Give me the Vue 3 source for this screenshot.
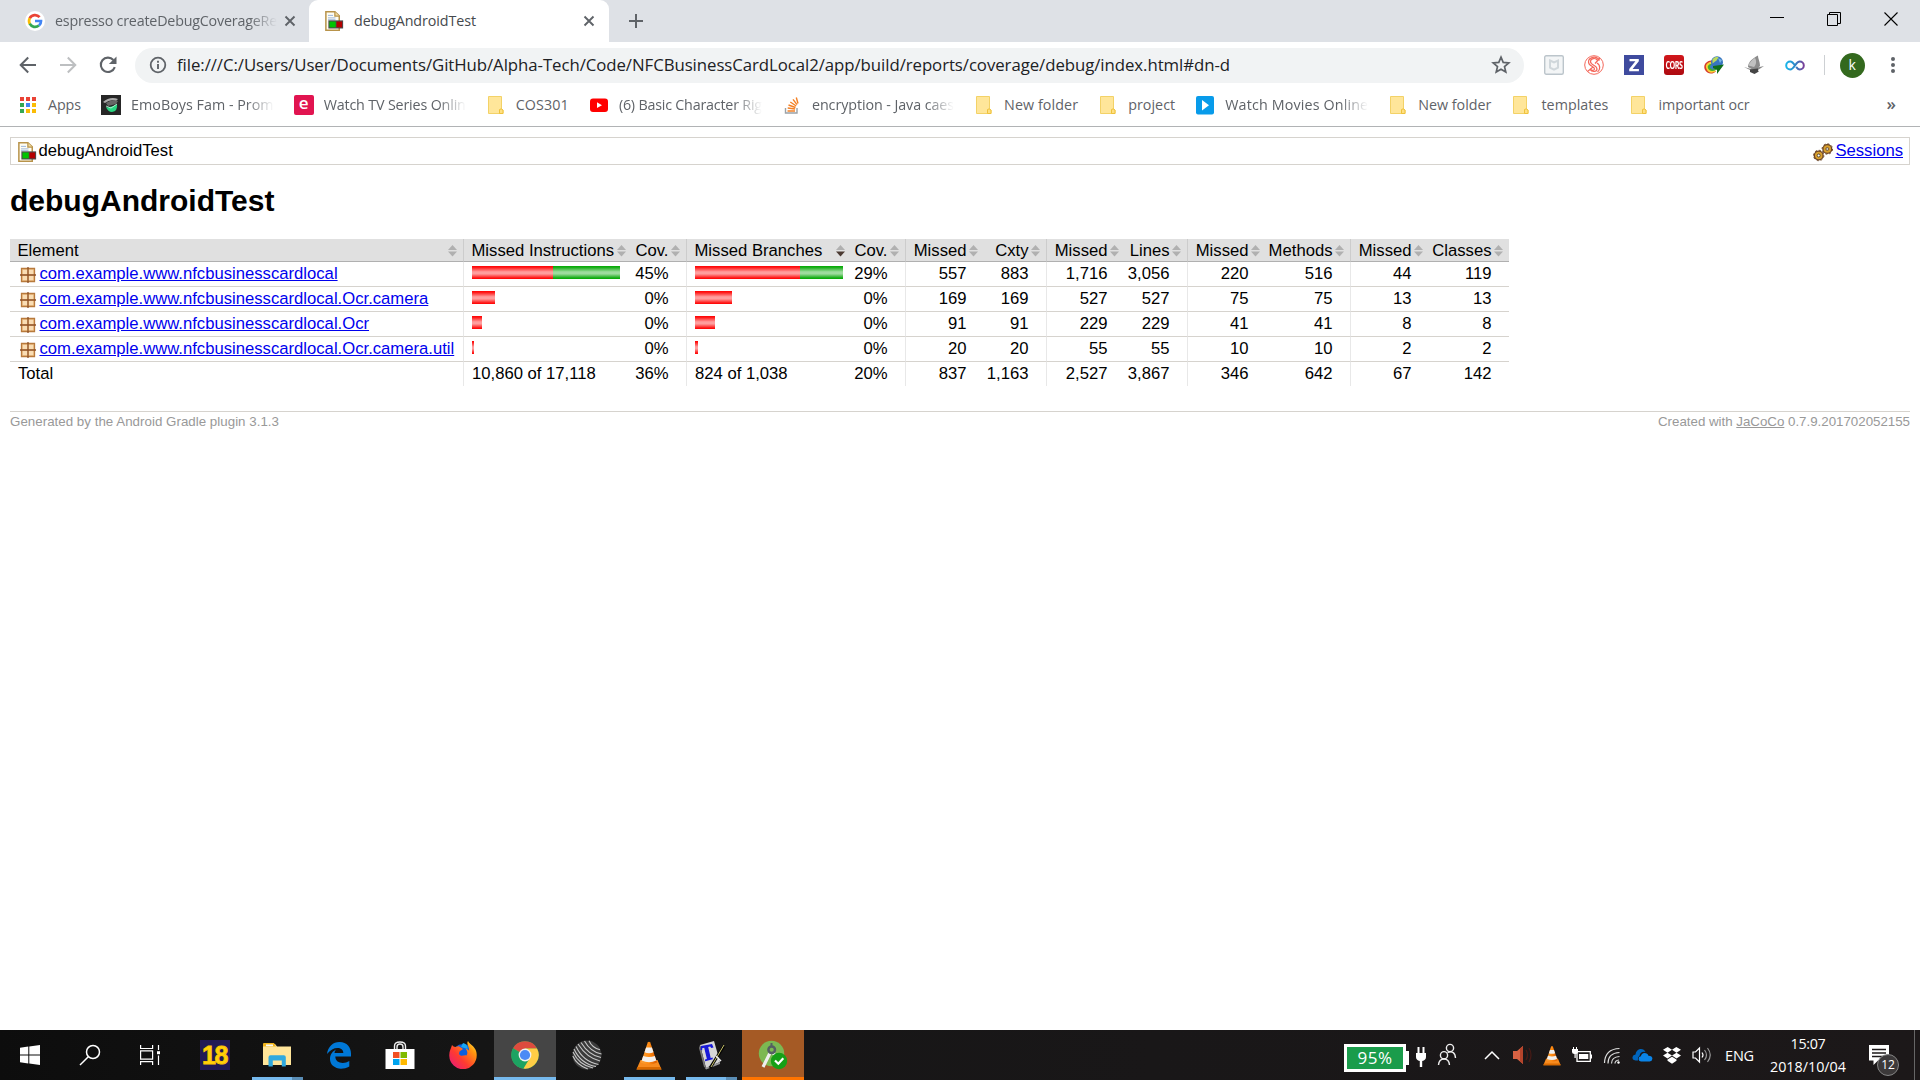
<script setup>
// Spreads a label's letters so that it fills the given width in pixels.
const vFit = {
  mounted(el, { value }) {
    if (!value) return
    const natural = el.getBoundingClientRect().width
    el.style.letterSpacing = `${(value - natural) / el.textContent.length}px`
  },
}

const bookmarks = [
  { icon: 'apps', label: 'Apps', width: 33 },
  { icon: 'emo', label: 'EmoBoys Fam - Prom', width: 142.5, fade: true },
  { icon: 'e', label: 'Watch TV Series Onlin', width: 142, fade: true },
  { icon: 'folder', label: 'COS301', width: 53 },
  { icon: 'youtube', label: '(6) Basic Character Rig', width: 143, fade: true },
  { icon: 'stack', label: 'encryption - Java caes', width: 142, fade: true },
  { icon: 'folder', label: 'New folder', width: 74 },
  { icon: 'folder', label: 'project', width: 47 },
  { icon: 'play', label: 'Watch Movies Online', width: 143, fade: true },
  { icon: 'folder', label: 'New folder', width: 73 },
  { icon: 'folder', label: 'templates', width: 67 },
  { icon: 'folder', label: 'important ocr', width: 91 },
]

const columns = [
  { label: 'Element', kind: 'name', width: 453 },
  { label: 'Missed Instructions', kind: 'bar', width: 168 },
  { label: 'Cov.', kind: 'ctr2', width: 55 },
  { label: 'Missed Branches', kind: 'bar', width: 165, sorted: true },
  { label: 'Cov.', kind: 'ctr2', width: 54 },
  { label: 'Missed', kind: 'ctr1', width: 79 },
  { label: 'Cxty', kind: 'ctr2', width: 62 },
  { label: 'Missed', kind: 'ctr1', width: 79 },
  { label: 'Lines', kind: 'ctr2', width: 62 },
  { label: 'Missed', kind: 'ctr1', width: 79 },
  { label: 'Methods', kind: 'ctr2', width: 84 },
  { label: 'Missed', kind: 'ctr1', width: 79 },
  { label: 'Classes', kind: 'ctr2', width: 80 },
]

const rows = [
  {
    name: 'com.example.www.nfcbusinesscardlocal',
    cells: [[81, 67], '45%', [105, 43], '29%', '557', '883', '1,716', '3,056', '220', '516', '44', '119'],
  },
  {
    name: 'com.example.www.nfcbusinesscardlocal.Ocr.camera',
    cells: [[23, 0], '0%', [37, 0], '0%', '169', '169', '527', '527', '75', '75', '13', '13'],
  },
  {
    name: 'com.example.www.nfcbusinesscardlocal.Ocr',
    cells: [[10, 0], '0%', [20, 0], '0%', '91', '91', '229', '229', '41', '41', '8', '8'],
  },
  {
    name: 'com.example.www.nfcbusinesscardlocal.Ocr.camera.util',
    cells: [[2, 0], '0%', [3, 0], '0%', '20', '20', '55', '55', '10', '10', '2', '2'],
  },
]

const totals = ['Total', '10,860 of 17,118', '36%', '824 of 1,038', '20%', '837', '1,163', '2,527', '3,867', '346', '642', '67', '142']
</script>

<template>
  <div class="screen">
    <svg class="defs" width="0" height="0">
      <defs>
        <linearGradient id="cone" x1="0" x2="1"><stop offset="0" stop-color="#f9a13a" /><stop offset=".5" stop-color="#ff8a10" /><stop offset="1" stop-color="#d85a00" /></linearGradient>
        <linearGradient id="flame" x1="0" y1="1" x2="1" y2="0"><stop offset="0" stop-color="#e31587" /><stop offset=".4" stop-color="#ff3b30" /><stop offset=".75" stop-color="#ff980e" /><stop offset="1" stop-color="#fff44f" /></linearGradient>
        <linearGradient id="loop"><stop offset="0" stop-color="#19b5ea" /><stop offset=".5" stop-color="#2c86c8" /><stop offset="1" stop-color="#7a3f98" /></linearGradient>
        <symbol id="report" viewBox="0 0 16 16">
          <path d="M1.500.6h7.200l3.500 3.200v11.600H1.500z" fill="#fffdf2" stroke="#b8934a" stroke-width="1.200" />
          <path d="M8.700.6v3.400h3.500" fill="#f2dca0" stroke="#b8934a" />
          <path d="M3.200 3.500h4M3.200 5.500h6M3.200 7h6" stroke="#9db7dc" stroke-width=".8" />
          <path d="M3.500 7.500h11.800v6.500H3.500z" fill="#4a4a4a" />
          <path d="M4.400 8.400h5v4.700h-5z" fill="#00c400" />
          <path d="M10 8.400h4.500v4.700H10z" fill="#b40000" />
        </symbol>
        <symbol id="vlc" viewBox="0 0 26 29">
          <path d="M4.500 19h17l4 9.500H.5z" fill="#f78b1f" />
          <path d="M1.500 26h23l1 2.500H.5z" fill="#d96a00" />
          <path d="M11.700 1.500q1.300-1.500 2.600 0L21 21.500q-8 4-16 0z" fill="url(#cone)" />
          <path d="M10.100 6.500h5.800l1.600 4.800q-4.500 1.700-9 0zM7.200 15q5.800 2 11.600 0l1.500 4.500q-7.300 3.300-14.600 0z" fill="#f0f0f0" />
        </symbol>
      </defs>
    </svg>

    <header class="tabs">
      <div class="tab">
        <svg class="favicon" width="20" height="20" viewBox="0 0 20 20">
          <circle cx="10" cy="10" r="10" fill="#fff" />
          <g fill="none" stroke-width="2.700">
            <path d="M14.600 6.200A6 6 0 0 0 4.700 7.300" stroke="#ea4335" />
            <path d="M4.800 7.200a6 6 0 0 0 0 5.700" stroke="#fbbc05" />
            <path d="M4.700 12.700a6 6 0 0 0 9.200 1.800" stroke="#34a853" />
            <path d="M10 10h6a6 6 0 0 1-2 4.600" stroke="#4285f4" />
          </g>
        </svg>
        <span class="tab-title fade" v-fit="222">espresso createDebugCoverageRe</span>
        <svg class="close" width="12" height="12" viewBox="0 0 12 12"><path d="M1.500 1.500l9 9M10.500 1.500l-9 9" stroke="#5f6368" stroke-width="1.900" /></svg>
      </div>
      <div class="tab active">
        <svg class="favicon" width="20" height="20"><use href="#report" /></svg>
        <span class="tab-title" v-fit="122">debugAndroidTest</span>
        <svg class="close" width="12" height="12" viewBox="0 0 12 12"><path d="M1.500 1.500l9 9M10.500 1.500l-9 9" stroke="#5f6368" stroke-width="1.900" /></svg>
      </div>
      <svg class="new-tab" width="16" height="16" viewBox="0 0 16 16"><path d="M8 1v14M1 8h14" stroke="#5f6368" stroke-width="2" /></svg>
      <div class="window-controls">
        <svg width="14" height="14" viewBox="0 0 14 14"><path d="M0 5.500h14" stroke="#000" /></svg>
        <svg width="14" height="14" viewBox="0 0 14 14" fill="none" stroke="#000"><path d="M.5 2.500h10v11H.5zM2.500 2.500v-2h11v11h-3" /></svg>
        <svg width="14" height="14" viewBox="0 0 14 14"><path d="M.5.5l13 13M13.500.5l-13 13" stroke="#000" stroke-width="1.100" /></svg>
      </div>
    </header>

    <nav class="toolbar">
      <svg width="20" height="20" viewBox="0 0 20 20" fill="none" stroke="#5f6368" stroke-width="2"><path d="M18 10H3M10.200 2.500L2.700 10l7.500 7.500" /></svg>
      <svg width="20" height="20" viewBox="0 0 20 20" fill="none" stroke="#bdbfc1" stroke-width="2"><path d="M2 10h15M9.800 2.500l7.500 7.500-7.500 7.500" /></svg>
      <svg width="20" height="20" viewBox="0 0 20 20"><path d="M16.800 12.200A7.200 7.200 0 1 1 15.400 5" fill="none" stroke="#5f6368" stroke-width="2.100" /><path d="M18.500 1.500v7.600h-7.600z" fill="#5f6368" /></svg>
      <div class="omnibox">
        <svg width="18" height="18" viewBox="0 0 18 18"><circle cx="9" cy="9" r="7.300" fill="none" stroke="#5f6368" stroke-width="1.800" /><path d="M9 8v5M9 4.800v1.900" stroke="#5f6368" stroke-width="1.900" /></svg>
        <span class="url" v-fit="1053">file:///C:/Users/User/Documents/GitHub/Alpha-Tech/Code/NFCBusinessCardLocal2/app/build/reports/coverage/debug/index.html#dn-d</span>
        <svg class="star" width="20" height="20" viewBox="0 0 20 20"><path d="M10 2.200l2.200 5.200 5.600.5-4.300 3.700 1.300 5.500L10 14.200l-4.800 2.900 1.300-5.500L2.200 7.900l5.600-.5z" fill="none" stroke="#5f6368" stroke-width="1.700" /></svg>
      </div>
      <div class="extensions">
        <svg width="20" height="20" viewBox="0 0 20 20"><rect x=".7" y=".7" width="18.600" height="18.600" rx="1.500" fill="#f3f5f6" stroke="#bcc5cb" stroke-width="1.400" /><path d="M6 5.500l4 2 4-2v7.200l-4 2-4-2z" fill="none" stroke="#d0d7db" stroke-width="2" /></svg>
        <svg width="20" height="20" viewBox="0 0 20 20" fill="none" stroke="#f4675a"><circle cx="10" cy="10" r="9.300" /><path d="M13.500 5.500C12 2.500 6.500 3 6.500 6.500c0 4 6.500 3.500 6.500 7.500 0 3-5 3.500-7 .5M15.500 5.500C12.500 0 4.500 2 4.500 7c0 4.500 6 4 6 7 0 1.500-2.500 2-4 .5M11 8.500L16 3M9 12l-5.500 4.500M13 8c4 2.500 3 7 .5 9" stroke-width="1.200" /></svg>
        <svg width="20" height="20" viewBox="0 0 20 20"><path d="M0 0h20v20H0z" fill="#3f4b9e" /><path d="M5.500 4h9.300v2.200L8.600 14h6.300v2.300H5.200V14l6.200-7.700H5.500z" fill="#fff" /></svg>
        <span class="cors"><b>CORS</b></span>
        <svg width="20" height="20" viewBox="0 0 20 20"><path d="M.8 14.500C-1.500 9 4 4.500 11 5.500l-1 3c-5 0-6 4 2 8-3 3-9 3-11.200-2z" fill="#d63a2c" /><path d="M2.300 13.500C.5 9 5 6 10 6.500l-1 3c-4 1-3 4 3 6.500-3 2.500-8 2.500-9.700-2.500z" fill="#f6d436" /><path d="M3.800 12.500C3.500 9.500 7 8 11 9l1 6c-4 2-7.500 1-8.200-2.500z" fill="#43ad32" /><path d="M6 12c0-2 2-3 5-2l1 4c-3 1-5.500 0-6-2z" fill="#3d7cc9" /><circle cx="13" cy="7.200" r="6" fill="#3875be" /><path d="M8.500 4.500c2-3 5-3.500 6-2l-2 3-4 3z" fill="#bad95c" /><path d="M14 3l4 2-2 3z" fill="#78b6e6" /><path d="M9 11l11-1.500L13 19v-4l-4-2z" fill="#0f6e1a" /></svg>
        <svg width="20" height="20" viewBox="0 0 20 20"><path d="M4 12C4 7 9 3 14 .5 14 4 16 6 16 11L11 16z" fill="#8b8b8b" /><path d="M11 3c2 3 1 7-1 9L4.500 10.500Q6 6 11 3z" fill="#c0c0c0" /><path d="M0 12l7 2 13-3-6 4 1 2H7l-1-2z" fill="#858585" /><path d="M6 14.500l8-1v3.500l-3.500 2-4.500-2z" fill="#454545" /></svg>
        <svg width="20" height="20" viewBox="0 0 20 20"><path d="M10 10.500C8 7.500 7 6.500 5.200 6.500a4 4 0 0 0 0 8C7.500 14.500 9 12 10 10.500S12.500 6.500 14.800 6.500a4 4 0 0 1 0 8c-1.800 0-2.800-1.500-3.600-2.600" fill="none" stroke="url(#loop)" stroke-width="2" /></svg>
      </div>
      <span class="separator"></span>
      <span class="avatar">k</span>
      <svg class="menu" width="6" height="20" viewBox="0 0 6 20" fill="#5f6368"><circle cx="3" cy="4" r="2" /><circle cx="3" cy="10" r="2" /><circle cx="3" cy="16" r="2" /></svg>
    </nav>

    <nav class="bookmarks">
      <a v-for="(b, i) in bookmarks" :key="i" class="bookmark">
        <svg v-if="b.icon === 'apps'" width="20" height="20" viewBox="0 0 20 20">
          <path d="M2 2h4v4H2zM8 2h4v4H8zM14 2h4v4h-4z" fill="#ea4335" />
          <path d="M2 8h4v4H2zM2 14h4v4H2z" fill="#34a853" />
          <path d="M8 8h4v4H8z" fill="#4285f4" />
          <path d="M14 8h4v4h-4zM8 14h4v4H8zM14 14h4v4h-4z" fill="#fbbc05" />
        </svg>
        <svg v-else-if="b.icon === 'emo'" width="20" height="20" viewBox="0 0 20 20"><path d="M0 0h20v20H0z" fill="#262626" /><path d="M2 7q7-6 15-3l-2 2Q9 4 4 8z" fill="#aaa" /><path d="M5 8q6-4 12-2l-2 3-8 2z" fill="#666" /><path d="M5 12q6 1 11-3 1 7-5 8-4 0-6-5z" fill="#28d581" /><path d="M5 11l5 2 6-4" fill="none" stroke="#d6fbe8" stroke-width=".8" /></svg>
        <span v-else-if="b.icon === 'e'" class="e-icon">e</span>
        <svg v-else-if="b.icon === 'folder'" width="20" height="20" viewBox="0 0 20 20"><path d="M2.500 1.500h13v12.500l1.500 1v3.500H2.500z" fill="#ffe69a" stroke="#f3d267" /><path d="M13.500 18.500v-4q1.500-1.500 3.500.5v3.500z" fill="#ffe082" stroke="#efc23c" /></svg>
        <svg v-else-if="b.icon === 'youtube'" width="20" height="20" viewBox="0 0 20 20"><rect x="1" y="3.500" width="18" height="13.500" rx="3" fill="#f00" /><path d="M8 7.300v5.800l5-2.900z" fill="#fff" /></svg>
        <svg v-else-if="b.icon === 'stack'" width="20" height="20" viewBox="0 0 20 20" fill="none"><path d="M3.500 13v5H15v-5" stroke="#9ba1a6" stroke-width="1.400" /><path d="M5.500 16h7.500M5.700 13l7.400 1M6.500 10l7 2.500M8.300 7l5.900 4M11 4.300l4 5.400M14.300 2.500l1.700 6" stroke="#f48024" stroke-width="1.400" /></svg>
        <svg v-else width="20" height="20" viewBox="0 0 20 20"><rect x="1" y="1" width="18" height="18.500" rx="2" fill="#089bea" /><path d="M7 5v10.500l7-5.300z" fill="#fff" /></svg>
        <span class="label" :class="{ fade: b.fade }" v-fit="b.width">{{ b.label }}</span>
      </a>
      <span class="more">»</span>
    </nav>

    <main class="report">
      <div class="breadcrumb">
        <span class="crumb"><svg width="20" height="20"><use href="#report" /></svg>debugAndroidTest</span>
        <span class="crumb">
          <svg width="20" height="20" viewBox="0 0 20 20">
            <g fill="#d9a02c" stroke="#6c4423">
              <circle cx="5.700" cy="13.500" r="4.400" stroke-width="1.300" /><circle cx="5.700" cy="13.500" r="5.200" fill="none" stroke-dasharray="2 2" />
              <circle cx="14.300" cy="7" r="4.400" stroke-width="1.300" /><circle cx="14.300" cy="7" r="5.200" fill="none" stroke-dasharray="2 2" />
            </g>
            <circle cx="5.700" cy="13.500" r="1.500" fill="#fff" stroke="#57462c" /><circle cx="14.300" cy="7" r="1.500" fill="#ccc" stroke="#7a5b36" />
          </svg><a class="link">Sessions</a>
        </span>
      </div>
      <h1>debugAndroidTest</h1>
      <table class="coverage">
        <colgroup><col v-for="(c, i) in columns" :key="i" :style="{ width: c.width + 'px' }" /></colgroup>
        <thead>
          <tr>
            <td v-for="(c, i) in columns" :key="i" :class="c.kind">
              <div class="head">
                <span>{{ c.label }}</span>
                <svg width="9" height="12" viewBox="0 0 9 12"><path d="M4.500 0L9 5H0z" fill="#b0b0b0" /><path d="M0 6.500h9L4.500 11.500z" :fill="c.sorted ? '#4b3a32' : '#b0b0b0'" /></svg>
              </div>
            </td>
          </tr>
        </thead>
        <tbody>
          <tr v-for="r in rows" :key="r.name">
            <td>
              <span class="package">
                <svg width="16" height="16" viewBox="0 0 16 16"><path d="M1.500 1.500h13v13h-13z" fill="#f0c48c" stroke="#b87a3c" stroke-width="1.300" /><path d="M3 3h4v4H3zM9 3h4v4H9zM3 9h4v4H3zM9 9h4v4H9z" fill="#f9ddb4" /><path d="M8 0v16M0 8h16" stroke="#8d5026" stroke-width="1.300" /></svg><a class="link">{{ r.name }}</a>
              </span>
            </td>
            <td v-for="(cell, i) in r.cells" :key="i" :class="columns[i + 1].kind">
              <div v-if="columns[i + 1].kind === 'bar'" class="bars">
                <span class="missed" :style="{ width: cell[0] + 'px' }"></span>
                <span class="covered" :style="{ width: cell[1] + 'px' }"></span>
              </div>
              <template v-else>{{ cell }}</template>
            </td>
          </tr>
        </tbody>
        <tfoot>
          <tr><td v-for="(t, i) in totals" :key="i" :class="columns[i].kind">{{ t }}</td></tr>
        </tfoot>
      </table>
      <footer class="footer">
        <span v-fit="269">Generated by the Android Gradle plugin 3.1.3</span>
        <span v-fit="252">Created with <u>JaCoCo</u> 0.7.9.201702052155</span>
      </footer>
    </main>

    <footer class="taskbar">
      <div class="system">
        <svg width="20" height="20" viewBox="0 0 20 20" fill="#fff"><path d="M0 2.800l8.300-1.200v7.900H0zM9.300 1.400L20 0v9.500H9.300zM0 10.500h8.300v7.900L0 17.200zM9.300 10.500H20V20L9.300 18.600z" /></svg>
        <svg width="22" height="22" viewBox="0 0 22 22" fill="none" stroke="#fff" stroke-width="1.500"><circle cx="14" cy="8" r="6.500" /><path d="M9.300 12.700L1 21" /></svg>
        <svg width="20" height="20" viewBox="0 0 20 20" fill="none" stroke="#fff" stroke-width="1.200"><path d="M.6 0v3.500h12V0M.6 5.800h12v8.400H.6zM.6 20v-3.400h12V20M18.500 0v5M18.500 10.500V20" /><path d="M17 6.200h3v3h-3z" fill="#fff" stroke="none" /></svg>
      </div>
      <div class="apps">
        <div class="app"><span class="eighteen">18</span></div>
        <div class="app grouped">
          <svg width="28" height="24" viewBox="0 0 28 24"><path d="M0 1h12l2 2.500h14V22H0z" fill="#ffe599" /><path d="M0 1q0-1 1-1h10l2 3.500H0z" fill="#f1b51c" /><path d="M3 1.500h7v1.700H3z" fill="#f6f9fb" /><path d="M5.500 23.500V14.300q0-2 2-2h13.300q2 0 2 2v9.200h-4v-6h-9v6z" fill="#2fa9df" /></svg>
        </div>
        <div class="app">
          <svg width="26" height="28" viewBox="0 0 26 28"><path d="M1 13C2 5.500 7 1 13.500 1 21 1 25 6.500 25 12.500v3H9.300c.2 7 8.700 8 14 4.500v5.500C14 30.500 3.500 26.500 4 17.500c.2-4.500 3-7.500 6-9-1 1.200-1.400 2.500-1.500 3.500h8.800C17.500 5.500 7 4.500 1 13z" fill="#0078d7" /></svg>
        </div>
        <div class="app">
          <svg class="store" width="30" height="30" viewBox="0 0 30 30"><path d="M9.500 9V6q0-4 5.500-4t5.500 4v3M12 9V7q0-3 3-3t3 3v2" fill="none" stroke="#eee" stroke-width="1.400" /><path d="M.5 9h29v20h-29z" fill="#fff" /><path d="M8 12h6.500v6H8z" fill="#f25022" /><path d="M15.500 12H22v6h-6.500z" fill="#7fba00" /><path d="M8 19h6.500v6H8z" fill="#00a4ef" /><path d="M15.500 19H22v6h-6.500z" fill="#ffb900" /></svg>
        </div>
        <div class="app">
          <svg width="28" height="28" viewBox="0 0 28 28"><circle cx="14" cy="13.500" r="10.500" fill="#0a5fe0" /><path d="M14 2c4 1 5 4 4.500 6L12 6z" fill="#16a7f2" /><path d="M3 4c1 1 2 2 3.500 2C9 5 10 5 11 6l3 2-3.500 2.500c-.5 2-1 2.500 1 4 2 1 4-1 6 0 2-3 0-6-1-7 2 .5 3 1.500 3.700 2.500C20 5 17 3 19 0c2 4 9 6 8.700 14A13.700 13.700 0 0 1 .3 15C0 10 2 8 3 4z" fill="url(#flame)" /></svg>
        </div>
        <div class="app selected running">
          <svg width="28" height="28" viewBox="0 0 28 28"><circle cx="14" cy="14" r="13.700" fill="#4cae50" /><path d="M14 14L2.100 7.200A13.700 13.700 0 0 1 26 7.500H14z" fill="#dd4b3e" /><path d="M2.100 7.200A13.700 13.700 0 0 0 12.500 27.600L18 18z" fill="#1da362" /><path d="M14 7.500h12A13.700 13.700 0 0 1 12.500 27.600L19 17z" fill="#ffcd46" /><circle cx="14" cy="14" r="6.400" fill="#f1f1f1" /><circle cx="14" cy="14" r="5.100" fill="#4c8bf5" /></svg>
        </div>
        <div class="app">
          <svg width="30" height="30" viewBox="0 0 30 30"><circle cx="15" cy="15" r="14.500" fill="#3b3b3b" /><g fill="none" stroke="#c9c9c9" stroke-width="1.100"><path d="M6 4q9 14 22 17M9 2.500q8 13 20 15M12.500 1q6 11 17 13M17 .7q3 7 11 9M4 6.500q7 15 22.500 18M2 9q7 15 22 17.500M1 12q6 13 20 16M.8 16q4 9 15 13" /></g></svg>
        </div>
        <div class="app running short"><svg width="26" height="29"><use href="#vlc" /></svg></div>
        <div class="app grouped">
          <svg width="30" height="30" viewBox="0 0 30 30"><path d="M4 5l14-4 6 21-14 6z" fill="#d6d6d6" /><path d="M4 5l-1 3 5 19 2 1z" fill="#777" /><path d="M9 28l15-6v2L10 29.500z" fill="#999" /><path d="M4.500 10l.5-4 11-2 1.500 3.500-2.300.5-1-1.500-2 .4 2.500 11 2-.3v1.700l-7.500 2-.3-1.700 2-.5-2.700-11.300-2 .5v2z" fill="#1819d8" /><path d="M28 6L14 28" stroke="#050505" stroke-width="3" /><path d="M28 5L15 27" stroke="#c9c36a" /><path d="M20 16l5 5" stroke="#eee" stroke-width="1.500" /></svg>
        </div>
        <div class="app alert running">
          <svg width="30" height="30" viewBox="0 0 30 30"><circle cx="13.500" cy="13.500" r="12.700" fill="#7cb852" /><path d="M12.500 12L5 27M15 12l7 15" stroke="#eee" stroke-width="3.200" /><circle cx="13.700" cy="9.700" r="3.300" fill="none" stroke="#555f62" stroke-width="2.500" /><path d="M13.500 3v4" stroke="#555f62" stroke-width="2" /><circle cx="21" cy="21" r="8.200" fill="#16a016" /><path d="M17 20.500l3.300 3.200 5-5.500" fill="none" stroke="#fff" stroke-width="2.200" /></svg>
        </div>
      </div>
      <div class="tray">
        <div class="battery"><span v-fit="35">95%</span></div>
        <svg class="plug" width="10" height="20" viewBox="0 0 10 20" fill="#fff"><path d="M1.500 0h2v6h-2zM6.500 0h2v6h-2zM0 6h10v4q0 3-3.800 4v6H3.800v-6Q0 13 0 10z" /></svg>
        <svg class="people" width="20" height="24" viewBox="0 0 20 24" fill="none" stroke="#eee" stroke-width="1.400"><circle cx="13" cy="5" r="3.600" /><circle cx="7" cy="12.200" r="3.600" /><path d="M1.500 22q.5-6 5.500-6t5.500 6M10.500 9.500Q18 7 18.500 15" /></svg>
        <div class="slot"><svg width="16" height="10" viewBox="0 0 16 10"><path d="M1 9l7-7 7 7" fill="none" stroke="#fff" stroke-width="1.500" /></svg></div>
        <div class="slot"><svg width="20" height="20" viewBox="0 0 20 20"><path d="M1 6h4l6-5v18l-6-5H1z" fill="#d86243" /><path d="M8 3.500L11 1v18l-3-2.500z" fill="#b5442b" /><path d="M14 5q3 5 0 10M17 3q4 7 0 14" fill="none" stroke="#451a15" stroke-width="1.300" /></svg></div>
        <div class="slot"><svg width="18" height="21"><use href="#vlc" /></svg></div>
        <div class="slot"><svg width="20" height="16" viewBox="0 0 20 16"><path d="M5 4.600h13.300v9.800H5z" fill="none" stroke="#fff" stroke-width="1.300" /><path d="M7 7h9.300v5H7zM18.500 7.500H20v4h-1.500z" fill="#fff" /><path d="M0 2h6v3q0 2-2.300 2v4H2.500V7Q0 7 0 5zM1 0h1v2H1zM4 0h1v2H4z" fill="#fff" /></svg></div>
        <div class="slot"><svg width="18" height="18" viewBox="0 0 18 18" fill="none" stroke="#ddd" stroke-width="1.200"><path d="M1.500 17Q2 3 16.500 2.500M5 17.500Q5 7 16.500 6.500M8.500 17.500Q8.500 11 16.500 10.500M12 17.500q0-3 4-3.500" /><circle cx="15.500" cy="16.500" r="1.200" fill="#fff" stroke="none" /></svg></div>
        <div class="slot"><svg width="21" height="14" viewBox="0 0 21 14"><path d="M3.500 12.500Q0 12 .5 9q.5-2.500 3-2.500Q4 2 8 1q4-.5 5.500 3-5-1-6 4-2 1-1.500 4.500z" fill="#0065bd" /><path d="M9 13.500q-2.500-.3-2.500-2.600 0-2.200 2.400-2.600.5-3.300 3.700-3.400 3 0 3.800 2.800 4 .2 4 3-.2 2.600-2.700 2.800z" fill="#0a84e8" /></svg></div>
        <div class="slot"><svg width="18" height="17" viewBox="0 0 18 17" fill="#fff"><path d="M4.700 0L9 2.800 4.500 5.700 0 2.800zM13.300 0L18 2.800l-4.500 2.900L9 2.800zM4.500 5.700L9 8.600l-4.500 2.900L0 8.600zM13.500 5.700L18 8.600l-4.500 2.900L9 8.600zM9 9.700l4.500 2.900v1.200L9 16.700l-4.500-2.900v-1.200z" /></svg></div>
        <div class="slot"><svg width="20" height="18" viewBox="0 0 20 18" fill="none" stroke="#fff" stroke-width="1.200"><path d="M1 6h2.500L7.500 2v14l-4-4H1z" /><path d="M10 6.500q2 2.500 0 5" /><path d="M12.500 4q4 5 0 10M15.500 2q5.500 7 0 14" stroke="#999" /></svg></div>
        <div class="lang"><span v-fit="29">ENG</span></div>
        <div class="clock"><span v-fit="35">15:07</span><span v-fit="76">2018/10/04</span></div>
        <div class="notify">
          <svg width="20" height="20" viewBox="0 0 20 20"><path d="M0 0h20v15.500H9L4.500 20v-4.500H0z" fill="#fff" /><path d="M3 4.500h14M3 8h14M3 11.500h14" stroke="#1c1819" stroke-width="1.400" /></svg>
          <span class="badge">12</span>
        </div>
      </div>
    </footer>
  </div>
</template>

<style>
body {
  margin: 0;
  background: #fff;
}
</style>

<style scoped>
.screen {
  width: 1920px;
  height: 1080px;
  display: flex;
  flex-direction: column;
  overflow: hidden;
  background: #fff;
  font-family: "Open Sans", "Noto Sans", sans-serif;
}
.defs { display: block; height: 0; flex: none; }
svg { display: block; flex: none; }
span { white-space: nowrap; }
.fade {
  -webkit-mask-image: linear-gradient(to right, #000 calc(100% - 28px), transparent);
  mask-image: linear-gradient(to right, #000 calc(100% - 28px), transparent);
}

.tabs {
  height: 42px;
  flex: none;
  display: flex;
  align-items: center;
  background: #dee1e6;
}
.tab {
  width: 284px;
  height: 42px;
  padding-left: 25px;
  display: flex;
  align-items: center;
  font-size: 14.3px;
  color: #5f6368;
}
.tab-title { margin: 0 0 2px 10px; flex: none; }
.tab .close { margin-left: auto; margin-right: 13px; }
.tab.active {
  width: 285px;
  padding-left: 15px;
  background: #fff;
  border-radius: 9px 9px 0 0;
  color: #45494d;
}
.tab.active .close { margin-right: 14px; }
.new-tab { margin-left: 19px; }
.window-controls {
  margin-left: auto;
  margin-right: 22px;
  display: flex;
  gap: 43px;
  margin-top: -5px;
}

.toolbar {
  height: 46px;
  flex: none;
  display: flex;
  align-items: center;
  padding-left: 18px;
}
.toolbar > svg { margin-right: 20px; }
.toolbar > svg:nth-of-type(3) { margin-right: 17px; }
.omnibox {
  width: 1389px;
  height: 35px;
  box-sizing: border-box;
  border-radius: 18px;
  background: #f1f3f4;
  display: flex;
  align-items: center;
  padding: 0 13px 0 14px;
  font-size: 16.8px;
  color: #202124;
}
.url { margin: 0 0 2px 10px; }
.star { margin-left: auto; }
.extensions { display: flex; gap: 20.1px; margin-left: 20px; }
.cors {
  width: 20px;
  height: 20px;
  border-radius: 3px;
  background: linear-gradient(#d1171c, #ad0a10);
  color: #fff;
  font-size: 8px;
  line-height: 19px;
  text-align: center;
}
.cors b { display: block; letter-spacing: -0.6px; transform: scale(0.9, 1.25); }
.separator { width: 1px; height: 20px; background: #cdd0d3; margin-left: 19px; }
.avatar {
  width: 25px;
  height: 25px;
  margin: 0 25px 0 15px;
  border-radius: 50%;
  background: #33691e;
  color: #fff;
  font-size: 14px;
  line-height: 24px;
  text-align: center;
}

.bookmarks {
  height: 38px;
  box-sizing: border-box;
  height: 39px;
  padding: 0 24px 4px 18px;
  flex: none;
  display: flex;
  align-items: center;
  border-bottom: 1px solid #b1b3b5;
  font-size: 14.3px;
  color: #5f6368;
}
.bookmark { display: flex; align-items: center; margin-right: 20.1px; flex: none; }
.bookmark .label { margin: 0 0 1px 10px; }
.e-icon {
  width: 20px;
  height: 20px;
  background: #e11450;
  border-radius: 2px;
  color: #fff;
  font-size: 17px;
  font-weight: 600;
  line-height: 16px;
  text-align: center;
}
.more { margin-left: auto; margin-bottom: 4px; font-size: 17px; font-weight: 600; }

.report {
  flex: 1;
  padding: 10px;
  font-family: "Liberation Sans", Arial, sans-serif;
  font-size: 16.67px;
  line-height: 19px;
  color: #000;
}
.breadcrumb {
  height: 28px;
  box-sizing: border-box;
  display: flex;
  justify-content: space-between;
  align-items: center;
  border: 1px solid #d6d3ce;
  padding: 0 6px 2px;
}
.crumb { display: flex; align-items: center; }
.crumb svg { margin: 3px 2px -1px -0.5px; }
.link { color: #00e; text-decoration: underline; }
h1 { margin: 18px 0 21px; font-size: 30px; line-height: 35px; font-weight: bold; }
.coverage {
  width: 1499px;
  table-layout: fixed;
  border-collapse: separate;
  border-spacing: 0;
}
td { box-sizing: border-box; white-space: nowrap; padding: 0 7px 2px 8px; }
thead td {
  height: 23px;
  padding: 0 6px 0 7.5px;
  background: #e0e0e0;
  border-bottom: 1px solid #b0b0b0;
}
.head { display: flex; align-items: center; justify-content: flex-end; gap: 2.5px; }
.name .head, .bar .head { justify-content: space-between; }
.head svg { margin-top: 1px; }
tbody td { height: 25px; border-bottom: 1px solid #d6d3ce; }
tfoot td { height: 24px; }
.bar, .ctr1 { border-left: 1px solid #e8e8e8; }
thead .bar, thead .ctr1 { border-left-color: #ccc; }
.ctr2, thead .ctr2 { padding-left: 2px; }
tbody .ctr1, tbody .ctr2, tfoot .ctr1, tfoot .ctr2 { text-align: right; padding-right: 17.5px; }
.package { display: flex; align-items: center; height: 19px; padding-left: 2px; }
.package svg { margin: 4px 3.5px 0 0; }
.bars { display: flex; height: 13px; margin-bottom: 1px; }
.missed { background: linear-gradient(#f00, #ff1c1c 12%, #ff9e9e 45%, #ff9e9e 60%, #ff1c1c 90%, #f00); }
.covered { background: linear-gradient(#0a0, #1cae1c 12%, #9edc9e 45%, #9edc9e 60%, #1cae1c 90%, #0a0); }
.footer {
  margin-top: 25px;
  padding-top: 1px;
  border-top: 1px solid #d6d3ce;
  display: flex;
  justify-content: space-between;
  font-size: 13.33px;
  line-height: 18px;
  color: #999;
}

.taskbar {
  height: 50px;
  flex: none;
  display: flex;
  background: linear-gradient(to right, #0d0d0d, #151515 25%, #191718 60%, #1c1819);
  color: #fff;
}
.system { display: flex; align-items: center; padding-left: 20px; gap: 39.5px; width: 163.5px; }
.system svg:nth-child(2) { margin: 0 -1px 0 -0.5px; }
.apps { display: flex; }
.app {
  width: 62px;
  display: flex;
  align-items: center;
  justify-content: center;
  position: relative;
}
.store { margin-right: 1px; }
.eighteen {
  width: 30px;
  height: 30px;
  background: #221a55;
  color: #ffd20a;
  font: bold 25px/30px "Liberation Sans", Arial, sans-serif;
  letter-spacing: -1.5px;
  text-align: center;
  -webkit-text-stroke: 0.8px #ffc400;
}
.running::after, .grouped::after {
  content: "";
  position: absolute;
  left: 0;
  right: 0;
  bottom: 0;
  height: 3px;
  background: #76b9ed;
}
.short::after { left: 6px; right: 5px; }
.grouped::after { left: 6px; right: 5px; background: linear-gradient(to right, #76b9ed 40px, #5a8db5 40px); }
.selected { background: #454545; }
.alert { background: #a55a25; }
.alert::after { background: #ff7400; }

.tray { margin-left: auto; display: flex; align-items: center; padding-right: 5px; }
.battery {
  width: 62px;
  height: 28px;
  box-sizing: border-box;
  border: 3px solid #fff;
  background: #1a9c4b;
  position: relative;
  font-size: 17px;
  line-height: 21px;
  text-align: center;
  margin-top: 5px;
}
.battery::after {
  content: "";
  position: absolute;
  right: -6px;
  top: 4px;
  width: 3px;
  height: 14px;
  background: #fff;
}
.battery span { display: inline-block; }
.plug { margin: 4px 11px 0 10px; }
.people { margin-right: 20px; }
.slot { width: 30px; display: flex; justify-content: center; }
.lang { width: 45px; text-align: center; font-size: 14.5px; }
.lang span { display: inline-block; }
.clock {
  width: 92px;
  display: flex;
  flex-direction: column;
  align-items: center;
  font-size: 14.3px;
  line-height: 23px;
}
.notify {
  width: 61px;
  height: 50px;
  box-sizing: border-box;
  padding: 15px 0 0 15px;
  position: relative;
  border-right: 1px solid #666;
}
.badge {
  position: absolute;
  left: 23px;
  top: 24px;
  width: 22px;
  height: 22px;
  box-sizing: border-box;
  border: 1px solid #858585;
  border-radius: 50%;
  background: #3c393a;
  font-size: 12px;
  line-height: 20px;
  text-align: center;
}
</style>
